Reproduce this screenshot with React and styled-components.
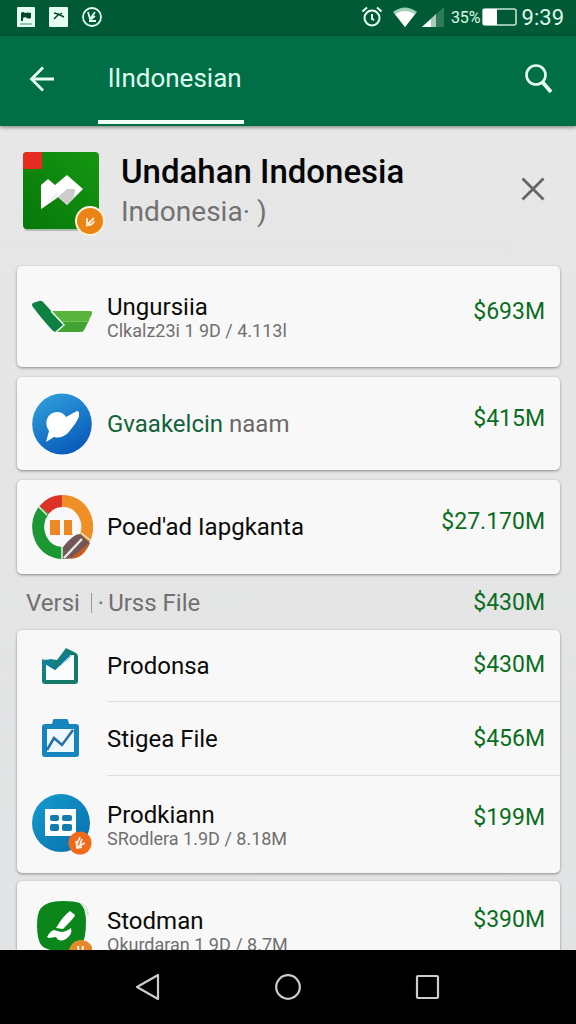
import React from 'react'
import styled, { createGlobalStyle, css } from 'styled-components'

const GlobalStyle = createGlobalStyle`
    * {
        box-sizing: border-box;
    }

    body {
        margin: 0;
        background: #000;
        font-family: Roboto, "Noto Sans", sans-serif;
    }

    h1, p, ul {
        margin: 0;
        padding: 0;
    }
`

const AlarmIcon = () => (
    <svg width="22" height="22" viewBox="0 0 22 22" fill="none" stroke="#e8fff2" strokeWidth="2">
        <circle cx="11" cy="12" r="7.5" />
        <path d="M1.5 5.5 6 1.5M20.5 5.5 16 1.5M11 8v5l2 1" />
    </svg>
)

const WifiIcon = () => (
    <svg width="26" height="20" viewBox="0 0 26 20">
        <path d="M1 5Q13-4 25 5L13 20Z" fill="#9fcfb6" />
        <path d="M3 7Q13 1 23 7L13 20Z" fill="#fff" />
    </svg>
)

const SignalIcon = () => (
    <svg width="22" height="20" viewBox="0 0 22 20">
        <path d="M0 20 22 0V20Z" fill="#2f7d58" />
        <path d="M0 20 14 7V20Z" fill="#a9cdb9" />
        <path d="M0 20 9 12V20Z" fill="#fff" />
    </svg>
)

const BatteryIcon = () => (
    <svg width="36" height="18" viewBox="0 0 36 18">
        <rect x="1" y="1" width="33" height="16" rx="2" fill="none" stroke="#c4e3d2" strokeWidth="1.6" />
        <path d="M1 1h14v16H1z" fill="#fff" />
    </svg>
)

const FlagNotice = () => (
    <svg width="18" height="20" viewBox="0 0 18 20">
        <rect width="18" height="20" rx="1" fill="#e4fff1" />
        <path d="M4 6q2-2 4 0 3-1 6 0v5q-2 1-4 0l-2-1-2 1v3H4z" fill="#07452b" />
        <path d="M3 17h12" stroke="#4b8b6c" />
    </svg>
)

const StrokeNotice = () => (
    <svg width="19" height="20" viewBox="0 0 19 20">
        <rect width="19" height="20" rx="1" fill="#e4fff1" />
        <path d="M5 6l4 1 2 1 4 2M10 7l-5 5M10 8l3-2" fill="none" stroke="#07452b" strokeWidth="1.5" />
    </svg>
)

const RoundNotice = () => (
    <svg width="20" height="20" viewBox="0 0 20 20" fill="none" stroke="#e4fff1">
        <circle cx="10" cy="10" r="9" strokeWidth="1.8" />
        <path d="M6 5l2 7 5-7M7 14h7M8 13l5-4" strokeWidth="1.8" />
    </svg>
)

const BackArrow = () => (
    <svg width="26" height="26" viewBox="0 0 26 26" fill="none" stroke="#e8fff4" strokeWidth="2.8">
        <path d="M25 13H3M14 1.500L2.500 13 14 24.500" />
    </svg>
)

const SearchIcon = () => (
    <svg width="28" height="30" viewBox="0 0 28 30" fill="none" stroke="#e8fff4">
        <circle cx="11" cy="11" r="9.500" strokeWidth="2.6" />
        <path d="M17 17.500 26 28" strokeWidth="3.800" />
    </svg>
)

const CloseIcon = () => (
    <svg width="24" height="24" viewBox="0 0 24 24" fill="none" stroke="#666" strokeWidth="2.8">
        <path d="M1.500 1.500 22.500 22.500M22.500 1.500 1.500 22.500" />
    </svg>
)

const AppLogo = () => (
    <svg width="84" height="86" viewBox="0 0 84 86">
        <defs>
            <linearGradient id="logoGreen" x1="1" y1="0" x2="0" y2="1">
                <stop offset="0" stopColor="#159611" />
                <stop offset="1" stopColor="#07780a" />
            </linearGradient>
        </defs>
        <rect x="1" y="2" width="75" height="77" rx="4" fill="#aebdae" />
        <rect width="76" height="77" rx="4" fill="url(#logoGreen)" />
        <path d="M4 0h15v17H0V4q0-4 4-4z" fill="#e72b20" />
        <path d="M18 33 25 27l7 6 12-10 16 14-16 16-9-8-17 12z" fill="#fff" />
        <path d="M35 45l9-8 8 0-1 8-7 8z" fill="#ccc" />
        <path d="M18 57 36 38l-2 8z" fill="#f1f1f1" />
        <circle cx="67" cy="69" r="15" fill="#fff0dc" />
        <circle cx="67" cy="69" r="13" fill="#ec8315" />
        <path d="M64 66v7l7-7M65 73q5 0 6-4" fill="none" stroke="#ffeed8" strokeWidth="1.800" />
    </svg>
)

const CartIcon = () => (
    <svg width="60" height="60" viewBox="0 0 60 60">
        <path d="M18 23H58Q61 23 60 26L52 42Q51 44 48 44H24z" transform="translate(0 1)" fill="#59b43c" />
        <path d="M22 35H56L52 43Q51 45 48 45H24z" fill="#42a333" />
        <path d="M24 34.500H57" stroke="#70c254" />
        <path d="M1 16 7 14q3-1 5 2l20 22-8 7-3-1Q9 31 1 20q-2-2 0-4z" fill="#0c8142" />
        <path d="M19 24l13 14-8 7" fill="none" stroke="#eafaf0" strokeWidth="1.500" />
    </svg>
)

const BirdIcon = () => (
    <svg width="60" height="62" viewBox="0 0 60 62">
        <defs>
            <linearGradient id="birdBlue" x1=".2" y1="0" x2=".7" y2="1">
                <stop offset="0" stopColor="#2f9fdb" />
                <stop offset="1" stopColor="#0758b9" />
            </linearGradient>
        </defs>
        <ellipse cx="30" cy="31" rx="29.800" ry="30.500" fill="url(#birdBlue)" />
        <path d="M14 49l3-11q-4-6-2-12 3-7 10-7 6 0 9 5l11-6 2 1v4q-1 5-11 17-7 6-14 4z" fill="#fff" />
    </svg>
)

const RingIcon = () => (
    <svg width="62" height="66" viewBox="-1 0 62 66">
        <path d="M30 7A24 26 0 0 1 52 46" fill="none" stroke="#f08f25" strokeWidth="12" />
        <path d="M30 7A24 25 0 0 0 12 16" fill="none" stroke="#dc3327" strokeWidth="12" />
        <path d="M12 16A24 26 0 0 0 31 59" fill="none" stroke="#1b9733" strokeWidth="12" />
        <path d="M6 12l9 9M30 53v12M49 39l9 7" stroke="#dff0dd" strokeWidth="1.500" />
        <path d="M18 26h10v15H18zM32 26h8v15h-8z" fill="#ed8925" />
        <path d="M27 40v1M40 40v1" stroke="#b85d14" />
        <path d="M31 65V53q10-13 17-13l10 9Q51 65 31 65z" fill="#705858" />
        <path d="M38 65 57 49Q53 64 38 65z" fill="#c85d1b" />
        <path d="M32 64 50 45" stroke="#eee6e4" strokeWidth="2.500" />
    </svg>
)

const TickBoxIcon = () => (
    <svg width="40" height="37" viewBox="0 0 40 37">
        <defs>
            <linearGradient id="tickBlend" x1="0" y1=".2" x2="1" y2="1">
                <stop offset="0" stopColor="#1686a5" />
                <stop offset=".5" stopColor="#147b68" />
            </linearGradient>
        </defs>
        <path d="M0 12q4 2 8 0l7 1L24 1l10 5q2 1 2 4v24q0 3-3 3H3q-3 0-3-3z" fill="url(#tickBlend)" />
        <path d="M4 17 13 23 28 8h4v25H4z" fill="#fafcfd" />
        <path d="M4 12 13 22 26 5l2 4-15 14L3 17z" fill="#077fa4" />
        <path d="M18 19 30 8" stroke="#93bdbf" />
    </svg>
)

const ClipboardIcon = () => (
    <svg width="40" height="38" viewBox="0 0 40 38">
        <path d="M3 5h7l1-4q0-1 2-1h11q2 0 2 1l1 4h7q3 0 3 3v27q0 3-3 3H3q-3 0-3-3V8q0-3 3-3z" fill="#1684bd" />
        <path d="M5 10h27v23H5z" fill="#edf8ff" />
        <path d="M5 31 12 19l8 7L31 11" fill="none" stroke="#266ea3" strokeWidth="2.500" />
    </svg>
)

const GridIcon = () => (
    <svg width="60" height="62" viewBox="0 0 60 62">
        <defs>
            <linearGradient id="gridBlue" x1="0" y1="0" x2="1" y2="1">
                <stop offset="0" stopColor="#159ccd" />
                <stop offset="1" stopColor="#076fac" />
            </linearGradient>
        </defs>
        <circle cx="29" cy="30" r="29" fill="url(#gridBlue)" />
        <path d="M13 16h31v27H13z" fill="#fff" />
        <g fill="#137eae">
            <rect x="18" y="22" width="9" height="6" rx="2" />
            <rect x="30" y="22" width="10" height="6" rx="2" />
            <rect x="18" y="31" width="9" height="7" rx="2" />
            <rect x="30" y="31" width="10" height="7" rx="2" />
        </g>
        <circle cx="48" cy="50" r="11.500" fill="#ef6b1b" />
        <path d="M44 48l1 6 8-4M45 51l3-7M48 52l2-6M44 55l6-1" fill="none" stroke="#fff0e4" strokeWidth="1.800" />
    </svg>
)

const BrushIcon = () => (
    <svg width="60" height="62" viewBox="-5 0 60 62">
        <path d="M4 8Q10 1 25 1q13 0 18 2 6 5 6 19 0 17-5 24-5 5-20 5-14 0-19-5Q0 41 0 25 0 13 4 8z" fill="#0b861b" />
        <path d="M43 3q9 3 8 12-2-7-8-12z" fill="#fff" stroke="#bde0c0" />
        <path d="M33 11l5 4q0 2-12 14l-7-1q7-12 14-17zM10 37q3-6 7-7l7 2q5 0 10-4 2 6-5 11-7 4-10-2l-7 1z" fill="#fff" />
        <circle cx="44" cy="52" r="12" fill="#e58a2b" />
        <path d="M41 46l1 8M46 46l-1 8" stroke="#fff3e2" strokeWidth="2" />
    </svg>
)

const featured = [
    { name: 'Ungursiia', detail: 'Clkalz23i 1 9D / 4.113l', price: '$693M', icon: <CartIcon />, height: 101, lift: 10 },
    { name: 'Gvaakelcin', rest: 'naam', price: '$415M', icon: <BirdIcon />, height: 93, lift: 10, green: true },
    { name: "Poed'ad Iapgkanta", price: '$27.170M', icon: <RingIcon />, height: 94, lift: 10 },
]

const files = [
    { name: 'Prodonsa', price: '$430M', icon: <TickBoxIcon />, height: 71, lift: 2 },
    { name: 'Stigea File', price: '$456M', icon: <ClipboardIcon />, height: 74, lift: 0 },
    { name: 'Prodkiann', detail: 'SRodlera 1.9D / 8.18M', price: '$199M', icon: <GridIcon />, height: 98, lift: 14 },
]

const more = [
    { name: 'Stodman', detail: 'Okurdaran 1 9D / 8.7M', price: '$390M', icon: <BrushIcon />, height: 100, lift: 22 },
]

const Row = ({ item }) => (
    <Item>
        <Thumb>{item.icon}</Thumb>
        <Content $height={item.height}>
            <Text>
                <Name $green={item.green}>
                    {item.name}
                    {item.rest && <Muted> {item.rest}</Muted>}
                </Name>
                {item.detail && <Detail>{item.detail}</Detail>}
            </Text>
            <Price $lift={item.lift}>{item.price}</Price>
        </Content>
    </Item>
)

const App = () => {
    return (
        <Screen>
            <GlobalStyle />
            <StatusBar>
                <Notices>
                    <FlagNotice />
                    <StrokeNotice />
                    <RoundNotice />
                </Notices>
                <System>
                    <AlarmIcon />
                    <WifiIcon />
                    <SignalIcon />
                    <Percent>35%</Percent>
                    <BatteryIcon />
                    <Clock>9:39</Clock>
                </System>
            </StatusBar>
            <AppBar>
                <IconButton aria-label="Back"><BackArrow /></IconButton>
                <Tab href="#indonesian">lIndonesian</Tab>
                <IconButton aria-label="Search"><SearchIcon /></IconButton>
            </AppBar>
            <Main>
                <Header>
                    <AppLogo />
                    <Heading>
                        <h1>Undahan Indonesia</h1>
                        <p>Indonesia· )</p>
                    </Heading>
                    <IconButton aria-label="Close"><CloseIcon /></IconButton>
                </Header>
                <Cards $gap={10}>
                    {featured.map((item) => (
                        <Card key={item.name}><Row item={item} /></Card>
                    ))}
                </Cards>
                <Section>
                    <span>Versi</span>
                    <Divider />
                    <span>·</span>
                    <SectionName>Urss File</SectionName>
                    <Price $lift={0}>$430M</Price>
                </Section>
                <Cards $gap={8}>
                    <Card>
                        {files.map((item) => <Row key={item.name} item={item} />)}
                    </Card>
                    <Card>
                        {more.map((item) => <Row key={item.name} item={item} />)}
                    </Card>
                </Cards>
            </Main>
            <NavBar>
                <NavButton aria-label="Back">
                    <svg width="26" height="28" viewBox="0 0 26 28" fill="none" stroke="#ccc" strokeWidth="2.200">
                        <path d="M23 2v24L2 14z" strokeLinejoin="round" />
                    </svg>
                </NavButton>
                <NavButton aria-label="Home">
                    <svg width="26" height="28" viewBox="0 0 26 28" fill="none" stroke="#ccc" strokeWidth="2.200">
                        <circle cx="13" cy="14" r="11.800" />
                    </svg>
                </NavButton>
                <NavButton aria-label="Recent apps">
                    <svg width="26" height="28" viewBox="0 0 26 28" fill="none" stroke="#ccc" strokeWidth="2.200">
                        <rect x="2" y="3" width="21" height="22" rx="1" />
                    </svg>
                </NavButton>
            </NavBar>
        </Screen>
    )
}

const Screen = styled.div`
    display: flex;
    flex-direction: column;
    height: 100vh;
    overflow: hidden;
`

const StatusBar = styled.div`
    display: flex;
    flex: none;
    align-items: center;
    justify-content: space-between;
    height: 36px;
    padding: 0 12px 2px 17px;
    background: #005a35;
    color: #dff7ea;
`

const Notices = styled.div`
    display: flex;
    align-items: center;
    gap: 14px;
`

const System = styled.div`
    display: flex;
    align-items: center;

    svg {
        flex: none;
        margin-right: 4px;
    }

    svg:first-child {
        margin-right: 9px;
    }
`

const Percent = styled.span`
    margin: 0 1px 0 3px;
    font-size: 16px;
`

const Clock = styled.span`
    font-size: 22px;
`

const AppBar = styled.header`
    position: relative;
    display: flex;
    flex: none;
    align-items: center;
    height: 90px;
    padding: 0 12px 4px 17px;
    background: #006f45;
    box-shadow: 0 1px 4px rgba(0, 0, 0, 0.5);
`

const IconButton = styled.button`
    display: flex;
    flex: none;
    align-items: center;
    justify-content: center;
    width: 50px;
    height: 50px;
    padding: 0;
    border: none;
    background: none;
    cursor: pointer;
`

const Tab = styled.a`
    align-self: flex-start;
    height: 88px;
    margin: 0 auto 0 31px;
    padding: 0 2px 0 10px;
    border-bottom: 4px solid #f0fff8;
    color: #dcfff0;
    font-size: 26px;
    line-height: 84px;
    text-decoration: none;
`

const Main = styled.main`
    flex: 1;
    min-height: 0;
    overflow: hidden;
    background: linear-gradient(#e7e7e7, #e2e3e4);
`

const Header = styled.div`
    display: flex;
    align-items: flex-start;
    height: 140px;
    padding: 26px 18px 0 23px;

    ${IconButton} {
        margin-top: 12px;
    }
`

const Heading = styled.div`
    flex: 1;
    min-width: 0;
    padding-left: 14px;

    h1 {
        color: #050505;
        font-size: 33px;
        font-weight: 500;
        line-height: 40px;
    }

    p {
        color: #717171;
        font-size: 28px;
        line-height: 40px;
    }
`

const Cards = styled.div`
    display: flex;
    flex-direction: column;
    gap: ${({ $gap }) => $gap}px;
    padding: 0 16px 0 17px;
`

const Card = styled.ul`
    list-style: none;
    border-radius: 5px;
    background: #f9f8f8;
    box-shadow: 0 1px 3px rgba(0, 0, 0, 0.4);
`

const Content = styled.div`
    display: flex;
    flex: 1;
    align-items: center;
    justify-content: space-between;
    min-width: 0;
    min-height: ${({ $height }) => $height}px;
    padding-right: 15px;
`

const Item = styled.li`
    display: flex;
    align-items: center;

    & + & ${Content} {
        border-top: 1px solid #dfdfdf;
    }
`

const Thumb = styled.div`
    display: flex;
    flex: none;
    justify-content: center;
    width: 90px;
`

const Text = styled.div`
    min-width: 0;
    white-space: nowrap;
`

const Name = styled.p`
    color: #0b0b0b;
    font-size: 24px;
    line-height: 28px;

    ${({ $green }) => $green && css`
        color: #12633b;
    `}
`

const Muted = styled.span`
    color: #696969;
`

const Detail = styled.p`
    color: #707070;
    font-size: 18px;
    line-height: 20px;
`

const Price = styled.span`
    flex: none;
    padding-bottom: ${({ $lift }) => $lift}px;
    color: #0a6e22;
    font-size: 23px;
    line-height: 28px;
`

const Section = styled.div`
    display: flex;
    align-items: center;
    height: 56px;
    padding: 2px 31px 0 26px;
    color: #707070;
    font-size: 24px;
`

const Divider = styled.span`
    width: 1px;
    height: 20px;
    margin: 0 6px 0 11px;
    background: #999;
`

const SectionName = styled.span`
    flex: 1;
    padding-left: 4px;
`

const NavBar = styled.nav`
    display: flex;
    flex: none;
    align-items: center;
    justify-content: center;
    gap: 90px;
    height: 74px;
    background: #000;
`

const NavButton = styled.button`
    display: flex;
    align-items: center;
    justify-content: center;
    width: 50px;
    height: 50px;
    padding: 0;
    border: none;
    background: none;
    cursor: pointer;
`

export default App
